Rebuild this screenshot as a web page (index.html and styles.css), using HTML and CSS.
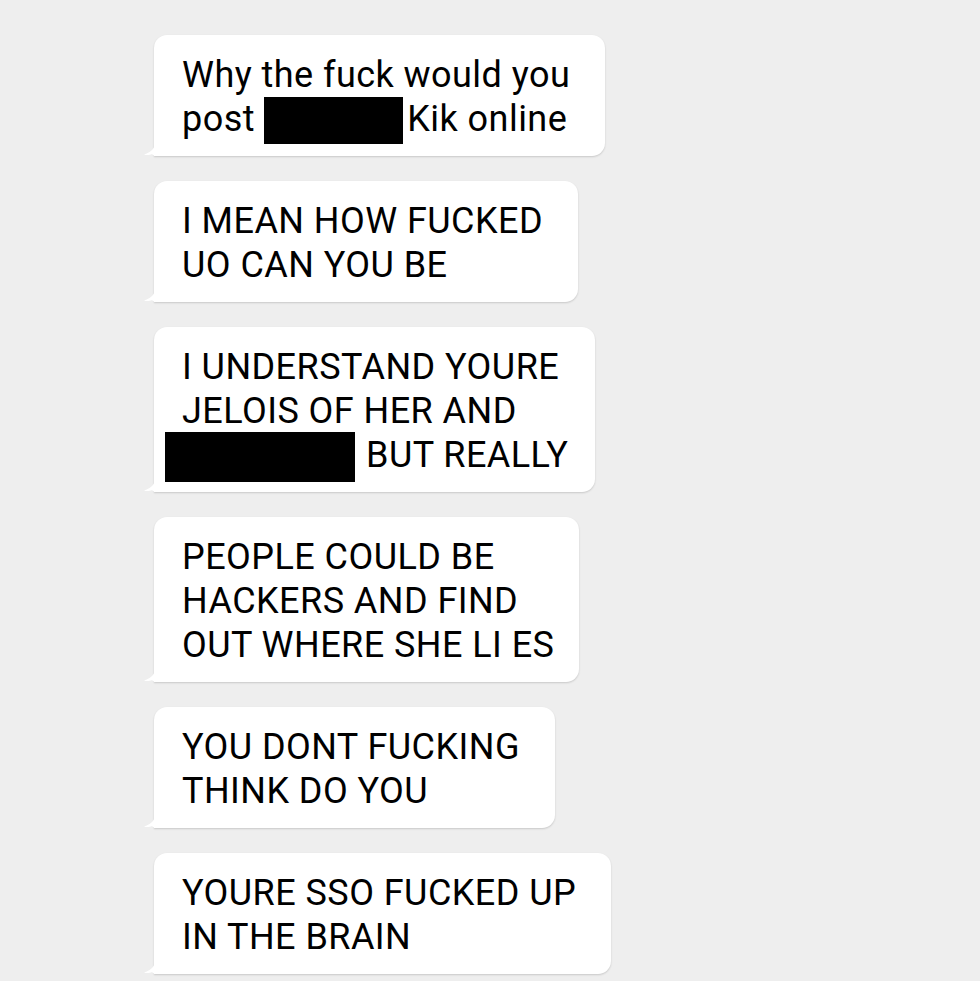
FILE: index.html
```html
<!DOCTYPE html>
<html>
<head>
<meta charset="utf-8">
<link rel="stylesheet" href="styles.css">
</head>
<body>
<div class="thread">
  <div class="bubble">
    <p class="text">Why the fuck would you<br>post <span class="redact redact-a"></span>Kik online</p>
    <svg class="tail" width="14" height="14" viewBox="0 0 14 14"><path d="M12 0 C12 6 9 10 1 12.5 C4 13.5 7 13 9 12 C10 13.5 12 14 14 14 L14 0 Z" fill="#fff"/></svg>
  </div>
  <div class="bubble">
    <p class="text">I MEAN HOW FUCKED<br>UO CAN YOU BE</p>
    <svg class="tail" width="14" height="14" viewBox="0 0 14 14"><path d="M12 0 C12 6 9 10 1 12.5 C4 13.5 7 13 9 12 C10 13.5 12 14 14 14 L14 0 Z" fill="#fff"/></svg>
  </div>
  <div class="bubble bubble-tight">
    <p class="text">I UNDERSTAND YOURE<br>JELOIS OF HER AND<br><span class="redact redact-b"></span>BUT REALLY</p>
    <svg class="tail" width="14" height="14" viewBox="0 0 14 14"><path d="M12 0 C12 6 9 10 1 12.5 C4 13.5 7 13 9 12 C10 13.5 12 14 14 14 L14 0 Z" fill="#fff"/></svg>
  </div>
  <div class="bubble bubble-tighter">
    <p class="text">PEOPLE COULD BE<br>HACKERS AND FIND<br>OUT WHERE SHE LI ES</p>
    <svg class="tail" width="14" height="14" viewBox="0 0 14 14"><path d="M12 0 C12 6 9 10 1 12.5 C4 13.5 7 13 9 12 C10 13.5 12 14 14 14 L14 0 Z" fill="#fff"/></svg>
  </div>
  <div class="bubble">
    <p class="text">YOU DONT FUCKING<br>THINK DO YOU</p>
    <svg class="tail" width="14" height="14" viewBox="0 0 14 14"><path d="M12 0 C12 6 9 10 1 12.5 C4 13.5 7 13 9 12 C10 13.5 12 14 14 14 L14 0 Z" fill="#fff"/></svg>
  </div>
  <div class="bubble">
    <p class="text">YOURE SSO FUCKED UP<br>IN THE BRAIN</p>
    <svg class="tail" width="14" height="14" viewBox="0 0 14 14"><path d="M12 0 C12 6 9 10 1 12.5 C4 13.5 7 13 9 12 C10 13.5 12 14 14 14 L14 0 Z" fill="#fff"/></svg>
  </div>
</div>
</body>
</html>
```

FILE: styles.css
```css
html, body {
  margin: 0;
  padding: 0;
  background: #eeeeee;
}
body {
  font-family: Roboto, "Liberation Sans", sans-serif;
  color: #000;
  overflow: hidden;
  height: 981px;
}
.thread {
  display: flex;
  flex-direction: column;
  align-items: flex-start;
  gap: 25px;
  padding: 35px 0 0 154px;
}
.bubble {
  position: relative;
  background: #fff;
  border-radius: 13px;
  border-bottom-left-radius: 0;
  box-shadow: 0 1px 2px rgba(0, 0, 0, 0.16);
  padding: 17.5px 35px 15.5px 28px;
}
.bubble-tight {
  padding-right: 27px;
}
.bubble-tighter {
  padding-right: 25px;
}
.text {
  margin: 0;
  font-size: 36px;
  letter-spacing: 0.45px;
  line-height: 44px;
  white-space: nowrap;
}
.tail {
  position: absolute;
  left: -11px;
  bottom: 0;
  display: block;
}
.redact {
  display: inline-block;
  background: #000;
  vertical-align: middle;
}
.redact-a {
  width: 139px;
  height: 47px;
  margin: -4px 4px -4px 0;
}
.redact-b {
  width: 190px;
  height: 50px;
  margin: -6px 11px -6px -17px;
}
```
